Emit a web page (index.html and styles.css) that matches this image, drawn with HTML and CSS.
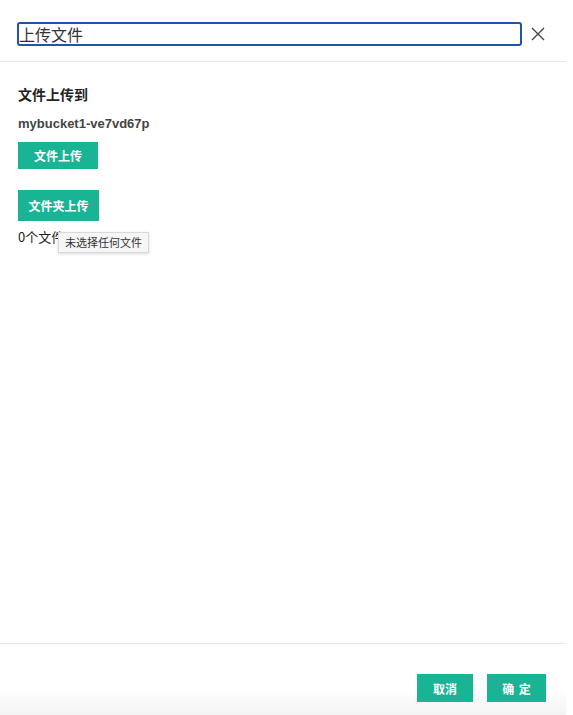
FILE: index.html
```html
<!DOCTYPE html>
<html lang="zh">
<head>
<meta charset="utf-8">
<link rel="stylesheet" href="styles.css">
</head>
<body>
<div class="modal">
  <div class="header">
    <div class="title-box">上传文件</div>
    <button class="close" aria-label="close">
      <svg width="14" height="14" viewBox="0 0 14 14"><path d="M1 1L13 13M13 1L1 13" stroke="#444" stroke-width="1.4" fill="none"/></svg>
    </button>
  </div>
  <div class="body">
    <div class="label">文件上传到</div>
    <div class="bucket">mybucket1-ve7vd67p</div>
    <button class="btn btn-file">文件上传</button>
    <button class="btn btn-folder">文件夹上传</button>
    <div class="count-row">
      <span class="count">0个文件</span>
      <span class="tooltip">未选择任何文件</span>
    </div>
  </div>
  <div class="footer">
    <button class="btn btn-foot">取消</button>
    <button class="btn btn-foot btn-ok">确&nbsp;定</button>
  </div>
</div>
</body>
</html>
```
FILE: styles.css
```css
html, body {
  margin: 0;
  padding: 0;
  background: #fff;
}
body {
  font-family: "Noto Sans CJK SC", "Noto Sans", sans-serif;
  color: #222;
}
.modal {
  width: 566px;
  height: 715px;
  display: flex;
  flex-direction: column;
}
.header {
  height: 62px;
  border-bottom: 1px solid #e6e6e6;
  display: flex;
  align-items: flex-start;
  padding: 22px 0 0 17px;
  box-sizing: border-box;
}
.title-box {
  width: 505px;
  height: 24px;
  box-sizing: border-box;
  border: 2px solid #1f55a8;
  border-radius: 3px;
  font-size: 16px;
  line-height: 20px;
  color: #333;
}
.close {
  border: 0;
  background: none;
  padding: 0;
  margin: 5px 0 0 9px;
  width: 14px;
  height: 14px;
  display: flex;
}
.body {
  flex: 1;
  padding: 0 18px;
  display: flex;
  flex-direction: column;
  align-items: flex-start;
}
.label {
  margin-top: 23px;
  font-size: 14px;
  font-weight: 700;
  line-height: 18px;
  color: #222;
}
.bucket {
  margin-top: 13px;
  font-family: "Liberation Sans", Arial, sans-serif;
  font-size: 13px;
  font-weight: 700;
  color: #444;
  line-height: 16px;
}
.btn {
  border: 0;
  background: #19b493;
  color: #fff;
  font-family: "Noto Sans CJK SC", sans-serif;
  font-weight: 700;
  font-size: 12px;
  padding: 0;
  display: flex;
  align-items: center;
  justify-content: center;
}
.btn-file {
  margin-top: 10px;
  width: 80px;
  height: 27px;
}
.btn-folder {
  margin-top: 21px;
  width: 81px;
  height: 31px;
}
.count-row {
  position: relative;
  margin-top: 7px;
  font-size: 13px;
  line-height: 18px;
  color: #222;
}
.tooltip {
  position: absolute;
  left: 40px;
  top: 4px;
  white-space: nowrap;
  font-size: 11px;
  line-height: 19px;
  padding: 0 6px;
  background: #f6f6f6;
  border: 1px solid #d9d9d9;
  color: #333;
  box-shadow: 0 1px 3px rgba(0,0,0,0.15);
}
.footer {
  height: 72px;
  border-top: 1px solid #e6e6e6;
  display: flex;
  justify-content: flex-end;
  align-items: flex-start;
  gap: 14px;
  padding: 30px 20px 0 0;
  box-sizing: border-box;
  background: linear-gradient(to bottom, #fff 0, #fff 45px, #f3f3f3 72px);
}
.btn-foot {
  width: 56px;
  height: 28px;
}
.btn-ok {
  width: 59px;
  word-spacing: 2px;
}
```
